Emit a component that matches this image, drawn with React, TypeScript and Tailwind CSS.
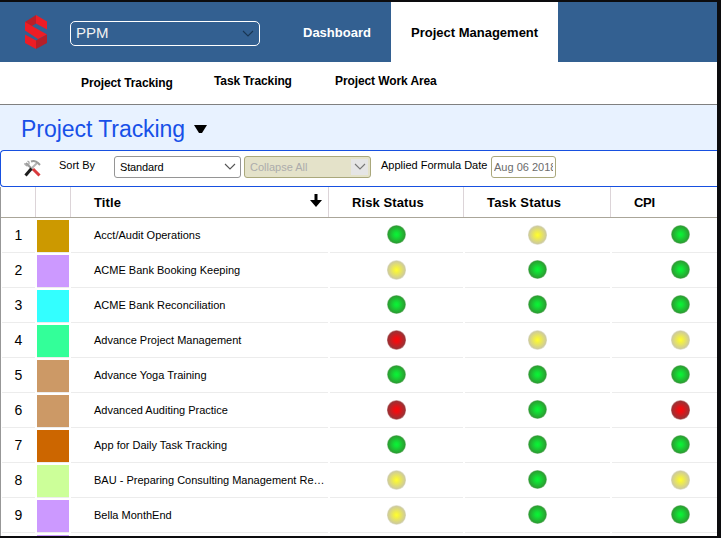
import React from 'react';

type Status = 'green' | 'yellow' | 'red';

interface Project {
  title: string;
  swatch: string;
  risk: Status;
  task: Status;
  cpi: Status;
}

const projects: Project[] = [
  { title: 'Acct/Audit Operations', swatch: 'bg-[#cc9900]', risk: 'green', task: 'yellow', cpi: 'green' },
  { title: 'ACME Bank Booking Keeping', swatch: 'bg-[#cc99ff]', risk: 'yellow', task: 'green', cpi: 'green' },
  { title: 'ACME Bank Reconciliation', swatch: 'bg-[#33ffff]', risk: 'green', task: 'green', cpi: 'green' },
  { title: 'Advance Project Management', swatch: 'bg-[#33ff99]', risk: 'red', task: 'yellow', cpi: 'yellow' },
  { title: 'Advance Yoga Training', swatch: 'bg-[#cc9966]', risk: 'green', task: 'green', cpi: 'green' },
  { title: 'Advanced Auditing Practice', swatch: 'bg-[#cc9966]', risk: 'red', task: 'green', cpi: 'red' },
  { title: 'App for Daily Task Tracking', swatch: 'bg-[#cc6600]', risk: 'green', task: 'green', cpi: 'green' },
  { title: 'BAU - Preparing Consulting Management Re…', swatch: 'bg-[#ccff99]', risk: 'yellow', task: 'green', cpi: 'yellow' },
  { title: 'Bella MonthEnd', swatch: 'bg-[#cc99ff]', risk: 'yellow', task: 'green', cpi: 'green' },
];

const lightColors: Record<Status, string> = {
  green: 'h-[19px] mb-[1px] bg-[radial-gradient(circle,#08f436_0%,#10e535_16%,#2b9f32_62%,#a9cda9_71%)]',
  yellow: 'h-5 bg-[radial-gradient(circle,#ffff2e_0%,#f3f044_18%,#cfcc9b_62%,#e8e8dc_71%)]',
  red: 'h-5 bg-[radial-gradient(circle,#fb080b_0%,#ec0e12_18%,#9b3134_62%,#d3aaaa_71%)]',
};

const StatusLight: React.FC<{ status: Status }> = ({ status }) => (
  <span className={`block w-[19px] rounded-full ${lightColors[status]}`} />
);

const Logo: React.FC = () => (
  <svg className="h-[34px] w-[22px]" viewBox="0 0 22 34">
    <path d="M11 0 22 6.500V14.500L11 8.500Z" fill="#ee1c25" />
    <path d="M11 0V8.500L7 11 0 15V7Z" fill="#ba1f29" />
    <path d="M0 7 22 19.500 13 24 0 15.500Z" fill="#ee1c25" />
    <path d="M0 19.500 11 25.500V34L0 28Z" fill="#ee1c25" />
    <path d="M22 19.500V28L11 34V25.500Z" fill="#b51f29" />
  </svg>
);

const Chevron: React.FC<{ className: string }> = ({ className }) => (
  <svg className={className} viewBox="0 0 12 8" fill="none" stroke="currentColor" strokeWidth="1.1">
    <path d="m1 1 5 5 5-5" />
  </svg>
);

const ToolsIcon: React.FC = () => (
  <svg className="h-[17px] w-[17px]" viewBox="0 0 17 17" fill="none">
    <path d="M2 3 9 10" stroke="#9a9a9a" strokeWidth="2" />
    <path d="M1 3V4.500L3 6 5 4V2L3.500 1" stroke="#a5a5a5" strokeWidth="1.300" />
    <path d="M13 3 7 9" stroke="#b5b5b5" strokeWidth="2" />
    <path d="M7 1.500Q11 0 14 3L16 5" stroke="#9c9c9c" strokeWidth="2" />
    <path d="M7.500 8.500 1.500 15.500" stroke="#1d1d1d" strokeWidth="3" />
    <path d="m9 9 6.500 6.500" stroke="#d93a3d" strokeWidth="3" />
  </svg>
);

const ProjectRow: React.FC<{ project: Project; index: number }> = ({ project, index }) => (
  <div className="flex h-[35px] gap-[2px] pl-[2px]">
    <div className="flex w-[33px] items-center justify-center border-b border-[#ececec] text-sm">{index}</div>
    <div className="w-8 border-b border-[#ececec] pt-[2px]">
      <div className={`h-8 ${project.swatch}`} />
    </div>
    <div className="flex w-[257px] items-center border-b border-[#ececec] pl-[23px]">
      <span className="text-[11px] whitespace-nowrap">{project.title}</span>
    </div>
    <div className="flex w-[133px] items-center border-b border-[#ececec] pl-[57px]">
      <StatusLight status={project.risk} />
    </div>
    <div className="flex w-[145px] items-center border-b border-[#ececec] pl-[63px]">
      <StatusLight status={project.task} />
    </div>
    <div className="flex flex-1 items-center border-b border-[#ececec] pl-[59px]">
      <StatusLight status={project.cpi} />
    </div>
  </div>
);

const App: React.FC = () => {
  return (
    <div className="h-[538px] w-[721px] overflow-hidden border-t-2 border-r-4 border-b-2 border-[#0c0c0e] bg-white font-['Liberation_Sans',Arial,sans-serif] text-black">
      {/* Main navigation */}
      <header className="flex h-[60px] bg-[#336091] pl-[25px]">
        <div className="flex w-[45px] pt-[13px]">
          <Logo />
        </div>
        <div className="mt-[19px] flex h-[25px] w-[190px] items-center justify-between rounded-[5px] border border-white pr-[5px] pl-[5px] text-white">
          <span className="-mt-[2px] text-[15px] leading-none text-[#f2f2f2]">PPM</span>
          <Chevron className="h-2 w-3 text-[#193653]" />
        </div>
        <nav className="flex text-[13px] font-bold">
          <div className="flex w-[131px] items-center pt-[2px] pl-[43px] text-white">Dashboard</div>
          <div className="flex w-[167px] items-center bg-white pt-[2px] pl-5 whitespace-nowrap">Project Management</div>
        </nav>
      </header>

      {/* Sub navigation */}
      <nav className="flex h-[43px] border-b border-[#808080] pt-[10px] pl-[81px] text-[12px] font-bold tracking-[-0.1px] whitespace-nowrap">
        <span className="w-[133px] pt-[2px]">Project Tracking</span>
        <span className="w-[121px]">Task Tracking</span>
        <span>Project Work Area</span>
      </nav>

      <div className="flex h-[45px] items-center bg-[#e8f2ff] pt-[3px] pl-[21px]">
        <h1 className="text-[23px] leading-none tracking-[-0.05px] text-[#1750e8]">Project Tracking</h1>
        <svg className="ml-[9px] h-[9px] w-[13px]" viewBox="0 0 13 9">
          <path d="M0 0H13L8 8H5Z" />
        </svg>
      </div>

      {/* Toolbar */}
      <div className="flex h-[37px] rounded-l-[4px] border border-r-0 border-[#1750e0] pl-[23px] text-[11px] whitespace-nowrap">
        <div className="w-[35px] pt-[9px]">
          <ToolsIcon />
        </div>
        <span className="w-[55px] pt-[6px]">Sort By</span>
        <div className="mt-[5px] flex h-[22px] w-[127px] items-center justify-between rounded-[3px] border border-[#959595] pr-1 pl-[5px]">
          <span className="tracking-[-0.15px]">Standard</span>
          <Chevron className="h-2 w-3 text-[#555]" />
        </div>
        <div className="mt-[5px] ml-[3px] flex h-[22px] w-[127px] items-center justify-between rounded-[3px] border border-[#aaa87c] bg-[#e4e2c9] pr-[2px] pl-[5px] text-[#acacac]">
          <span>Collapse All</span>
          <div className="flex h-4 w-[17px] items-center justify-center bg-[#e5e5e5]">
            <Chevron className="h-2 w-3 text-[#777]" />
          </div>
        </div>
        <span className="w-[120px] pt-[6px] pl-[10px]">Applied Formula Date</span>
        <div className="mt-[5px] h-[22px] w-[65px] rounded-[3px] border border-[#aaa87c] px-[2px] pt-[2px] text-[#6c6c6c]">
          <div className="overflow-hidden">Aug 06 2018</div>
        </div>
      </div>

      {/* Project grid */}
      <div className="h-[349px] overflow-hidden border-l border-[#979797]">
        <div className="-ml-px">
          <div className="flex h-[31px] border-b border-[#aaa699] text-[13px] font-bold tracking-[0.1px] whitespace-nowrap">
            <div className="w-9 border-r border-[#dcd4d8]" />
            <div className="w-[35px] border-r border-[#dcd4d8]" />
            <div className="flex w-[258px] items-center justify-between border-r border-[#dcd4d8] pt-[2px] pr-[5px] pl-[23px]">
              <span>Title</span>
              <svg className="-mt-[5px] h-[13px] w-[14px]" viewBox="0 0 14 13">
                <path d="M5.500 0H8.500V6H13L7 13 1 6H5.500Z" />
              </svg>
            </div>
            <div className="flex w-[135px] items-center border-r border-[#dcd4d8] pt-[2px] pl-[23px]">Risk Status</div>
            <div className="flex w-[147px] items-center border-r border-[#dcd4d8] pt-[2px] pl-[23px] tracking-[0.2px]">Task Status</div>
            <div className="flex items-center pt-[2px] pl-[23px] tracking-[-0.3px]">CPI</div>
          </div>
          {projects.map((project, i) => (
            <ProjectRow key={project.title} project={project} index={i + 1} />
          ))}
          <div className="ml-[37px] h-8 w-8 translate-y-[2px] bg-[#cc99ff]" />
        </div>
      </div>
    </div>
  );
};

export default App;
